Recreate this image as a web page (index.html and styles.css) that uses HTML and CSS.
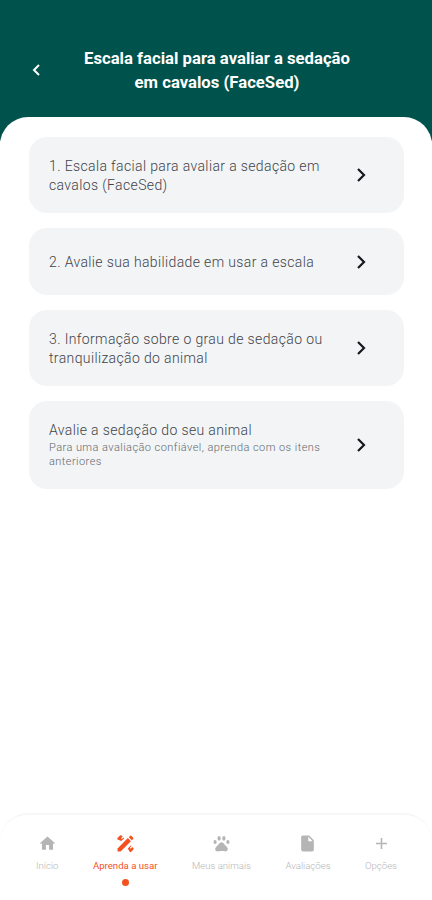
FILE: index.html
```
<!DOCTYPE html>
<html lang="pt-BR">
<head>
  <meta charset="UTF-8" />
  <meta name="viewport" content="width=device-width, initial-scale=1.0"/>
  <title>FaceSed</title>
  <link rel="stylesheet" href="styles.css">
</head>
<body>

<header class="header">
  <button class="back-btn" aria-label="Voltar">
    <svg width="10" height="14" viewBox="0 0 10 14"><path d="M8 2L3 7l5 5"/></svg>
  </button>
  <h1>Escala facial para avaliar a sedação<br>em cavalos (FaceSed)</h1>
</header>

<main class="content">
  <a class="card" href="#">
    <div class="card-text"><h2>1. Escala facial para avaliar a sedação em<br>cavalos (FaceSed)</h2></div>
    <svg class="arrow" width="10" height="14" viewBox="0 0 10 14"><path d="M2 1l6 6-6 6"/></svg>
  </a>
  <a class="card card-short" href="#">
    <div class="card-text"><h2>2. Avalie sua habilidade em usar a escala</h2></div>
    <svg class="arrow" width="10" height="14" viewBox="0 0 10 14"><path d="M2 1l6 6-6 6"/></svg>
  </a>
  <a class="card" href="#">
    <div class="card-text"><h2>3. Informação sobre o grau de sedação ou<br>tranquilização do animal</h2></div>
    <svg class="arrow" width="10" height="14" viewBox="0 0 10 14"><path d="M2 1l6 6-6 6"/></svg>
  </a>
  <a class="card card-tall" href="#">
    <div class="card-text">
      <h2>Avalie a sedação do seu animal</h2>
      <p>Para uma avaliação confiável, aprenda com os itens<br>anteriores</p>
    </div>
    <svg class="arrow" width="10" height="14" viewBox="0 0 10 14"><path d="M2 1l6 6-6 6"/></svg>
  </a>
</main>

<nav class="tabbar">
  <a class="tab" href="#">
    <svg viewBox="0 0 24 24"><path d="M10 20v-6h4v6h5v-8h3L12 3 2 12h3v8z"/></svg>
    <span>Início</span>
  </a>
  <a class="tab active" href="#">
    <svg viewBox="0 0 24 24">
      <path d="M2 18.2L15 5.2l3.8 3.8-13 13H2z"/>
      <path d="M16.2 4l1.5-1.5a1.4 1.4 0 0 1 2 0l1.8 1.8a1.4 1.4 0 0 1 0 2L20 7.800z"/>
      <path d="M2 5l3-3a1.500 1.500 0 0 1 2.100 0l1.300 1.300-2 2 1 1 2-2 1 1-3.600 3.600L2 7a1.400 1.400 0 0 1 0-2z"/>
      <path d="M15 18.200l3.600-3.600.9.900-2 2 1 1 2-2 1.300 1.300a1.500 1.500 0 0 1 0 2.100l-2.600 2.600a1.400 1.400 0 0 1-2 0z"/>
    </svg>
    <span>Aprenda a usar</span>
  </a>
  <a class="tab" href="#">
    <svg viewBox="0 0 24 24">
      <ellipse cx="3.900" cy="10.200" rx="2" ry="2.500"/><ellipse cx="9" cy="5.500" rx="2" ry="2.900"/><ellipse cx="15" cy="5.500" rx="2" ry="2.900"/><ellipse cx="20.100" cy="10.200" rx="2" ry="2.500"/>
      <path d="M17.34 14.86c-.87-1.02-1.6-1.89-2.48-2.91-.46-.54-1.05-1.08-1.75-1.32a3.2 3.2 0 0 0-2.22 0c-.7.24-1.28.78-1.75 1.32-.87 1.02-1.6 1.89-2.48 2.91-1.31 1.31-2.92 2.76-2.62 4.79.29 1.02 1.02 2.03 2.33 2.32.73.15 3.06-.44 5.54-.44h.18c2.48 0 4.81.58 5.54.44 1.31-.29 2.04-1.31 2.33-2.32.31-2.04-1.3-3.49-2.62-4.79z"/>
    </svg>
    <span>Meus animais</span>
  </a>
  <a class="tab" href="#">
    <svg viewBox="0 0 24 24"><path d="M6 2a2 2 0 0 0-2 2v16c0 1.1.9 2 2 2h12a2 2 0 0 0 2-2V8l-6-6zm7 7V3.5L18.5 9z"/></svg>
    <span>Avaliações</span>
  </a>
  <a class="tab" href="#">
    <svg viewBox="0 0 24 24"><path d="M19 13h-6v6h-2v-6H5v-2h6V5h2v6h6z"/></svg>
    <span>Opções</span>
  </a>
</nav>

</body>
</html>
```
FILE: styles.css
```
:root {
  --green: #00524c;
  --orange: #f4511e;
  --card: #f2f4f6;
}

* {
  margin: 0;
  padding: 0;
  box-sizing: border-box;
  font-family: Roboto, 'Liberation Sans', sans-serif;
}

body {
  height: 100vh;
  display: flex;
  flex-direction: column;
  background: linear-gradient(var(--green) 141px, #fff 141px);
  overflow: hidden;
}

a {
  text-decoration: none;
}

.header {
  height: 117px;
  padding: 47px 28px 0 31px;
  display: grid;
  grid-template-columns: 14px 1fr 15px;
  align-items: start;
  color: #fff;
}

.header h1 {
  font-size: 16.7px;
  line-height: 24px;
  font-weight: 700;
  text-align: center;
  white-space: nowrap;
}

.back-btn {
  height: 46px;
  display: flex;
  align-items: center;
  border: none;
  background: none;
}

.back-btn path {
  fill: none;
  stroke: #fff;
  stroke-width: 2;
}

.content {
  flex: 1;
  display: flex;
  flex-direction: column;
  gap: 15px;
  padding: 20px 28px 0 29px;
  background: #fff;
  border-radius: 28px 28px 0 0;
}

.card {
  height: 76px;
  display: flex;
  align-items: center;
  justify-content: space-between;
  padding: 0 38px 0 20px;
  border-radius: 18px;
  background: var(--card);
}

.card-short {
  height: 67px;
}

.card-tall {
  height: 88px;
}

.card-text {
  padding-top: 2px;
  white-space: nowrap;
}

.card-tall .card-text {
  padding: 0;
}

.card h2 {
  color: #3f4348;
  font-size: 14px;
  line-height: 19px;
  font-weight: 300;
  letter-spacing: 0.37px;
}

.card p {
  margin-top: 1px;
  color: #63696f;
  font-size: 11px;
  line-height: 14px;
  font-weight: 300;
  letter-spacing: 0.44px;
}

.arrow path {
  fill: none;
  stroke: #17191c;
  stroke-width: 2.2;
}

.tabbar {
  height: 87px;
  display: flex;
  justify-content: space-between;
  padding: 19px 35px 0 36px;
  border-top: 2px solid #f7f7f7;
  border-radius: 28px 28px 0 0;
  background: #fff;
}

.tab {
  display: flex;
  flex-direction: column;
  align-items: center;
  color: #b5b5b5;
  font-size: 9.6px;
  line-height: 12px;
  white-space: nowrap;
}

.tab span {
  font-weight: 300;
}

.tab svg {
  width: 19px;
  height: 19px;
  margin-bottom: 7px;
  fill: currentColor;
}

.tab.active {
  color: var(--orange);
}

.tab.active span {
  font-weight: 400;
}

/* dot under the current tab */
.tab.active::after {
  content: '';
  width: 7px;
  height: 7px;
  margin-top: 7px;
  border-radius: 50%;
  background: var(--orange);
}
```
